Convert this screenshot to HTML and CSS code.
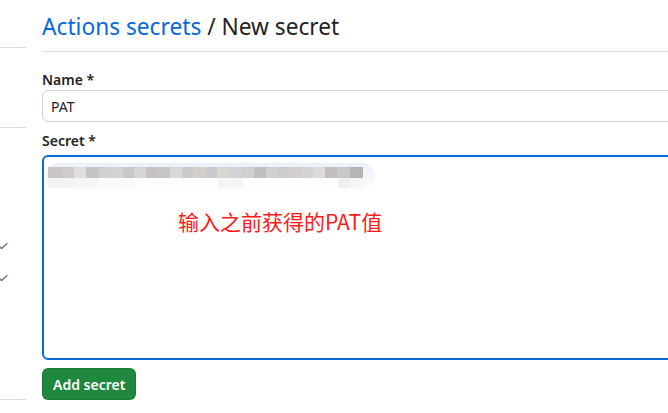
FILE: index.html
```html
<!DOCTYPE html>
<html>
<head>
<meta name="viewport" content="width=device-width, initial-scale=1">
<link rel="stylesheet" href="styles.css">
</head>
<body>

<div class="layout">
  <div class="sidebar">
    <div class="side-top"></div>
    <div class="side-group"></div>
    <ul class="side-list">
      <li></li>
      <li><svg class="check" width="10" height="8" viewBox="0 0 10 8"><polyline points="1,3 3.6,5.6 9,0.6"/></svg></li>
      <li><svg class="check" width="10" height="8" viewBox="0 0 10 8"><polyline points="1,3 3.6,5.6 9,0.6"/></svg></li>
    </ul>
  </div>

  <div class="main">
    <h2 class="page-title"><a href="#">Actions secrets</a> / New secret</h2>

    <form class="secret-form">
      <label for="secret-name">Name *</label>
      <input type="text" id="secret-name" class="form-input" value="PAT">

      <label for="secret-value">Secret *</label>
      <div id="secret-value" class="secret-box">
        <div class="blurred">
          <div class="blur-row top"></div>
          <div class="blur-row bottom"></div>
        </div>
        <div class="note">输入之前获得的PAT值</div>
      </div>

      <button type="button" class="btn-add">Add secret</button>
    </form>
  </div>
</div>

</body>
</html>
```

FILE: styles.css
```css
* {
  box-sizing: border-box;
}

body {
  margin: 0;
  overflow: hidden;
  font-family: "Segoe UI", "Noto Sans", sans-serif;
  color: #1f2328;
  background: #fff;
}

.layout {
  display: flex;
  gap: 16px;
}

/* settings menu, mostly off screen */
.sidebar {
  width: 26px;
  flex-shrink: 0;
}

.side-top {
  height: 48px;
  border-bottom: 1px solid #d8dee4;
}

.side-group {
  height: 80px;
  border-bottom: 1px solid #d8dee4;
}

.side-list {
  margin: 0;
  padding: 0;
  list-style: none;
  height: 272px;
  border-bottom: 1px solid #d8dee4;
}

.side-list li {
  height: 32px;
  display: flex;
  align-items: center;
}

.side-list li:first-child {
  height: 103px;
}

.check {
  margin-left: -2px;
  fill: none;
  stroke: #656d76;
  stroke-width: 1.3;
  stroke-linecap: round;
  stroke-linejoin: round;
}

.main {
  width: 700px;
  flex-shrink: 0;
}

.page-title {
  margin: 0;
  padding: 11px 0 8px;
  font-size: 22.7px;
  font-weight: 400;
  line-height: 32px;
  border-bottom: 1px solid #d8dee4;
}

.page-title a {
  color: #0969da;
  text-decoration: none;
}

.secret-form {
  padding-top: 17px;
}

.secret-form label {
  display: block;
  font-size: 14px;
  font-weight: 600;
  line-height: 21px;
}

.form-input {
  display: block;
  width: 100%;
  height: 32px;
  margin: 0 0 8px;
  padding: 5px 8px;
  font-family: inherit;
  font-size: 14px;
  color: #1f2328;
  border: 1px solid #d0d7de;
  border-radius: 6px;
  outline: none;
}

.secret-box {
  margin-top: 4px;
  height: 205px;
  border: 2px solid #0969da;
  border-radius: 6px;
  padding: 6px 0 0 2px;
}

.blurred {
  width: 329px;
  height: 27px;
  padding: 4px 0 0 2px;
  border-radius: 13px;
  background: linear-gradient(180deg, #eaf1fb 0%, #f5f8fd 60%, #fcfdfe 100%);
}

.blur-row {
  width: 315px;
}

.blur-row.top {
  height: 11px;
  background: linear-gradient(90deg,
    #c9c5c7 0 14px, #cfcbcd 14px 26px, #e2dedf 26px 38px, #c4c3c5 38px 51px,
    #d1cfd0 51px 63px, #d2d4d6 63px 75px, #cdc6c8 75px 86px, #d6d6d6 86px 98px,
    #c7c1c3 98px 110px, #c9c5c7 110px 122px, #dad9d9 122px 134px, #cbcbcd 134px 145px,
    #d3d0cc 145px 157px, #c9cbd1 157px 169px, #d8d7d0 169px 181px, #d1d4d8 181px 193px,
    #cfcfcf 193px 206px, #bfbfc3 206px 218px, #cfd1cf 218px 230px, #cdcbcc 230px 241px,
    #d2cecf 241px 253px, #d4d4d4 253px 265px, #dddbdd 265px 277px, #c2bebe 277px 289px,
    #c9c7c7 289px 302px, #b5b5b5 302px 315px);
}

.blur-row.bottom {
  height: 10px;
  background: linear-gradient(90deg,
    #f4f2f2 0 26px, #f7f6f6 26px 50px, #fafafa 50px 86px, #fdfdfd 86px 170px,
    #f5f6f4 170px 195px, #fefefe 195px 290px, #eff0ef 290px 302px, #f6f6f6 302px 315px);
}

.note {
  margin: 18px 0 0 132px;
  font-family: "Microsoft YaHei", "Noto Sans CJK SC", sans-serif;
  font-size: 21px;
  line-height: 27px;
  color: #ff1a1a;
}

.btn-add {
  display: block;
  margin-top: 8px;
  height: 32px;
  padding: 0 10px;
  font-family: inherit;
  font-size: 14px;
  font-weight: 600;
  color: #fff;
  background: #1f883d;
  border: 1px solid rgba(31, 35, 40, 0.15);
  border-radius: 6px;
  cursor: pointer;
}
```
